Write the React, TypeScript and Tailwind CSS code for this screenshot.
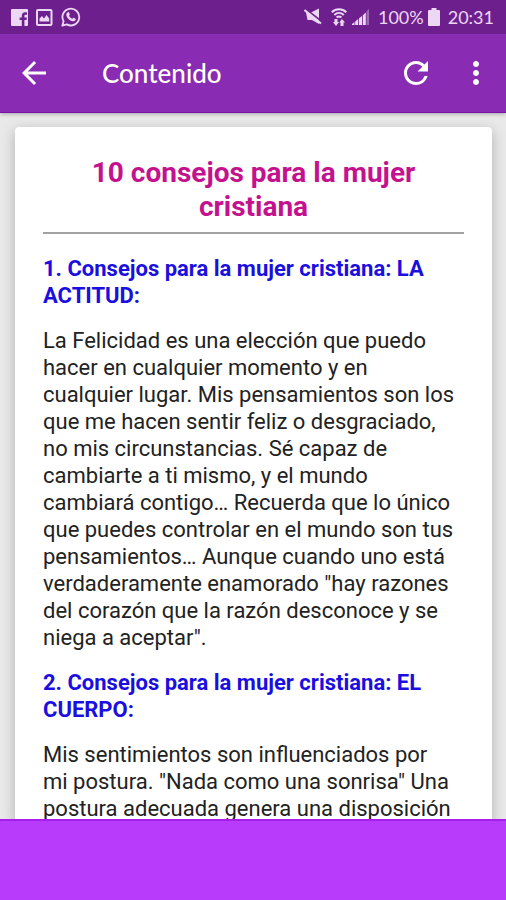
import type { ReactNode } from "react";
import { MdArrowBack, MdMoreVert, MdRefresh } from "react-icons/md";

const sections = [
  {
    title: "1. Consejos para la mujer cristiana: LA ACTITUD:",
    body: 'La Felicidad es una elección que puedo hacer en cualquier momento y en cualquier lugar. Mis pensamientos son los que me hacen sentir feliz o desgraciado, no mis circunstancias. Sé capaz de cambiarte a ti mismo, y el mundo cambiará contigo… Recuerda que lo único que puedes controlar en el mundo son tus pensamientos… Aunque cuando uno está verdaderamente enamorado "hay razones del corazón que la razón desconoce y se niega a aceptar".',
  },
  {
    title: "2. Consejos para la mujer cristiana: EL CUERPO:",
    body: 'Mis sentimientos son influenciados por mi postura. "Nada como una sonrisa" Una postura adecuada genera una disposición',
  },
];

function StatusBar() {
  return (
    <div className="flex h-[34px] shrink-0 items-center justify-between bg-[#6d208d] pl-[11px] pr-3 text-[#ecd8f5]">
      <div className="flex items-center gap-2">
        <svg viewBox="0 0 17 17" className="h-[17px] w-[17px]" fill="currentColor" aria-label="Facebook">
          <path d="M1 0h15a1 1 0 0 1 1 1v15a1 1 0 0 1-1 1h-2.600v-6h2.100l.4-2.500h-2.500V7c0-.8.3-1.300 1.300-1.300H16V3.400c-.4-.1-1.100-.1-1.900-.1-2 0-3.300 1.200-3.300 3.400v1.800H8.600V11h2.200v6H1a1 1 0 0 1-1-1V1a1 1 0 0 1 1-1z" />
        </svg>
        <svg viewBox="0 0 17 17" className="h-[17px] w-[17px]" aria-label="Imagen">
          <rect x="1" y="1" width="14.500" height="15" rx="1" fill="none" stroke="currentColor" strokeWidth="2" />
          <path d="M3.500 12.500V9.500L6 7l2 2.500L10.500 6l2.700 3.500v3z" fill="currentColor" />
        </svg>
        <svg viewBox="0 0 20 20" className="h-5 w-5" aria-label="WhatsApp">
          <path d="M1.300 18.700l1.300-4.400A8.400 8.400 0 1 1 5.800 17.400z" fill="none" stroke="currentColor" strokeWidth="1.800" strokeLinejoin="round" />
          <path d="M6.800 5.300c.5-.4 1-.3 1.200.2l.8 1.700c.2.500-.5 1.100-.8 1.500.7 1.400 1.800 2.500 3.300 3.100.4-.4.900-1.200 1.400-1l1.700.9c.5.300.4.900.1 1.400-.7 1.100-2 1.500-3.200 1.100-2.900-.8-5.300-3.100-5.900-5.800-.3-1.200.4-2.400 1.400-3.100z" fill="currentColor" />
        </svg>
      </div>
      <div className="flex items-center text-lg leading-5">
        <svg viewBox="0 0 18 18" className="h-[18px] w-[18px]" aria-label="Sin sonido">
          <path d="M2 4.500h5L15 .5v15.500L8 12H3.500z" fill="currentColor" />
          <path d="M1 .5l17 13" stroke="#6d208d" strokeWidth="1.600" />
          <path d="M.5 2l16.500 13.500" stroke="currentColor" strokeWidth="2" />
        </svg>
        <svg viewBox="0 0 18 18" className="ml-2 h-[18px] w-[18px]" aria-label="Wi-Fi">
          <path d="M1.800 4.200c4-4 10.500-4 14.500 0M4.300 7c2.800-2.600 6.700-2.600 9.500 0M6.600 9.500c1.500-1.300 3.300-1.300 4.800 0" fill="none" stroke="currentColor" strokeWidth="2" />
          <path d="M4.500 11h3v3h1.500l-3 4-3-4h1.500zM10.500 18h3v-3.500H15l-3-3.500-2.700 3.500h1.200z" fill="currentColor" />
        </svg>
        <svg viewBox="0 0 18 18" className="ml-1 h-[18px] w-[18px]" fill="currentColor" aria-label="Señal">
          <path d="M0 17h2.500v-3L0 16zM3.200 17h3v-6l-3 2.500zM7 17h3V8l-3 2.300zM10.800 17h3V4.500l-3 2.800z" />
          <path d="M14.500 17H17V1l-2.500 2.500z" opacity=".4" />
        </svg>
        <span className="ml-2">100%</span>
        <svg viewBox="0 0 12 18" className="ml-1 h-[18px] w-3" fill="currentColor" aria-label="Batería">
          <path d="M3.500 0h5v2H11a1 1 0 0 1 1 1v14a1 1 0 0 1-1 1H1a1 1 0 0 1-1-1V3a1 1 0 0 1 1-1h2.500z" />
        </svg>
        <span className="ml-2">20:31</span>
      </div>
    </div>
  );
}

function IconButton({ label, children }: { label: string; children: ReactNode }) {
  return (
    <button type="button" aria-label={label} className="flex h-12 w-9 items-center justify-center">
      {children}
    </button>
  );
}

export default function App() {
  return (
    <div className="flex h-screen flex-col overflow-hidden bg-[#e9e9e9] font-['Roboto',sans-serif]">
      <header className="z-10 shrink-0 font-['Lato',sans-serif] shadow-[0_1px_4px_rgba(0,0,0,0.3)]">
        <StatusBar />
        <div className="flex h-[79px] items-center border-b border-[#7a12a8] bg-[#892bb3] pl-4 pr-3 text-white">
          <IconButton label="Volver">
            <MdArrowBack size={36} />
          </IconButton>
          <h1 className="ml-[50px] flex-1 text-[26px] leading-8 font-medium">Contenido</h1>
          <div className="flex gap-6">
            <IconButton label="Actualizar">
              <MdRefresh size={36} />
            </IconButton>
            <IconButton label="Más opciones">
              <MdMoreVert size={36} />
            </IconButton>
          </div>
        </div>
      </header>

      <main className="min-h-0 flex-1 overflow-hidden pt-[14px] pr-[14px] pl-[15px]">
        <article className="rounded-t-sm bg-white px-7 pt-[29px] text-[22px] leading-[27px] shadow-[0_4px_14px_rgba(0,0,0,0.25)]">
          <h2 className="text-center text-[28px] leading-[34px] font-bold text-[#c4128f]">
            10 consejos para la mujer cristiana
          </h2>
          <hr className="mt-2 mb-[21px] border-t-2 border-[#a2a2a2]" />
          {sections.map((section) => (
            <section key={section.title} className="mb-[18px]">
              <h3 className="mb-[18px] font-bold text-[#1a0fe0]">{section.title}</h3>
              <p className="pr-[9px] text-[#222]">{section.body}</p>
            </section>
          ))}
        </article>
      </main>

      <footer className="h-[81px] shrink-0 border-t-2 border-[#a81cee] bg-[#b83bfc]" />
    </div>
  );
}
